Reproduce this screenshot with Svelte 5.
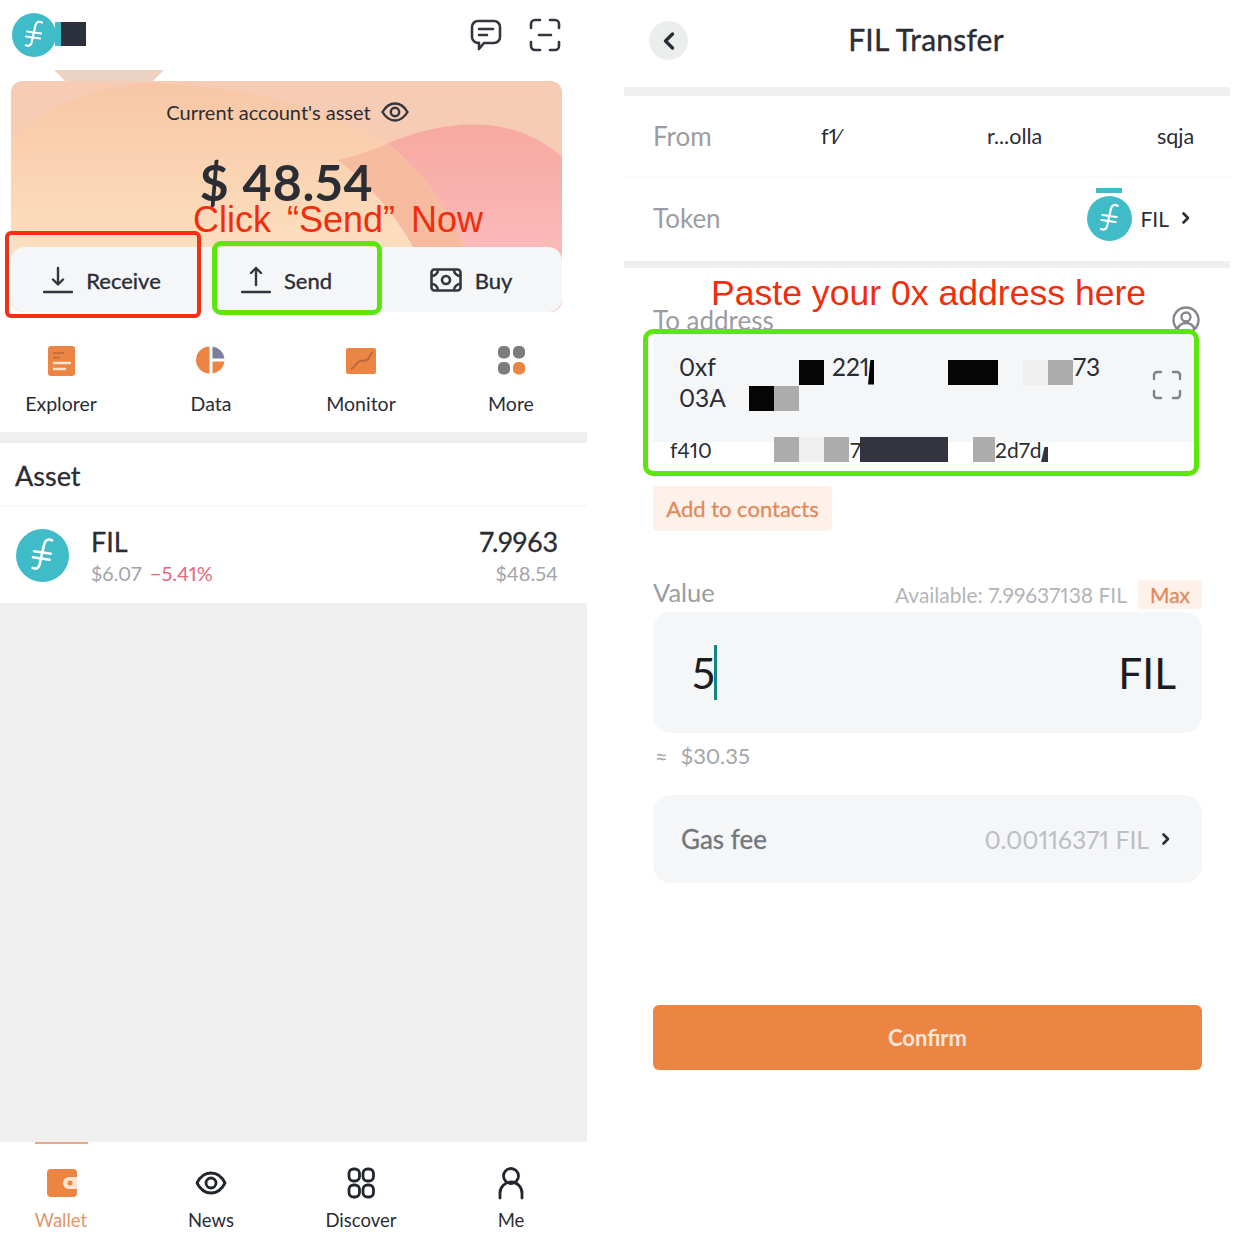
<script>
  const shortcuts = ["Explorer", "Data", "Monitor", "More"];
  const tabs = ["Wallet", "News", "Discover", "Me"];

  // address lines are partly blanked out, every piece has a fixed width
  const addressLines = [
    [
      { text: "0xf", w: 120 },
      { block: "black", w: 25 },
      { text: "221", w: 44, pad: 8 },
      { block: "wedge", w: 6 },
      { w: 74 },
      { block: "black", w: 50 },
      { w: 25 },
      { block: "light", w: 25 },
      { block: "grey", w: 25 },
      { text: "73", w: 30 },
    ],
    [
      { text: "03A", w: 70 },
      { block: "black", w: 25 },
      { block: "grey", w: 25 },
    ],
  ];
  const subLine = [
    { text: "f410", w: 104 },
    { block: "grey", w: 25 },
    { block: "light", w: 25 },
    { block: "grey", w: 25 },
    { text: "7", w: 11, pad: 1 },
    { block: "dark", w: 88 },
    { w: 25 },
    { block: "grey", w: 22 },
    { text: "2d7d", w: 46 },
    { block: "wedge low", w: 7 },
  ];
</script>

{#snippet filecoin(size)}
  <svg class="fil" width={size} height={size} viewBox="0 0 44 44">
    <circle cx="22" cy="22" r="22" fill="#3fbcc8" />
    <path d="M30 9.500c-3-1.600-5.600-.6-6.600 3l-3.800 17c-.8 3.200-3 4-5.800 2.800" fill="none" stroke="#fff" stroke-width="2.200" stroke-linecap="round" />
    <path d="M15 18.500l14 2M14 23.500l14 2" stroke="#fff" stroke-width="2" stroke-linecap="round" />
  </svg>
{/snippet}

{#snippet addressLine(parts)}
  {#each parts as p}
    {#if p.block}
      <span class="blank {p.block}" style="width:{p.w}px"></span>
    {:else}
      <span class="piece" style="width:{p.w}px;padding-left:{p.pad || 0}px">{p.text || ""}</span>
    {/if}
  {/each}
{/snippet}

<div class="page">
  <section class="wallet">
    <header class="top">
      <div class="account">
        {@render filecoin(44)}
        <span class="acct-blank"></span>
      </div>
      <div class="top-icons">
        <svg width="32" height="34" viewBox="0 0 32 34" fill="none" stroke="#33363f" stroke-width="2.600" stroke-linecap="round" stroke-linejoin="round">
          <path d="M8 3h16a6 6 0 0 1 6 6v10a6 6 0 0 1-6 6H14l-5 6v-6.200A6 6 0 0 1 2 19V9a6 6 0 0 1 6-6z" />
          <path d="M9 11h14M9 17h8" />
        </svg>
        <svg width="32" height="34" viewBox="0 0 32 34" fill="none" stroke="#33363f" stroke-width="2.600" stroke-linecap="round" stroke-linejoin="round">
          <path d="M2 10V6a4 4 0 0 1 4-4h5M21 2h5a4 4 0 0 1 4 4v4M30 24v4a4 4 0 0 1-4 4h-5M11 32H6a4 4 0 0 1-4-4v-4M10 17h12" />
        </svg>
      </div>
    </header>

    <div class="card">
      <div class="tab-shape"></div>
      <svg class="card-bg" viewBox="0 0 551 231" preserveAspectRatio="none">
        <defs>
          <linearGradient id="base" x1="0" y1="0" x2="0" y2="1">
            <stop offset="0" stop-color="#f8c6a4" />
            <stop offset="0.75" stop-color="#fce0c0" />
          </linearGradient>
          <linearGradient id="pink" x1="0" y1="0" x2="0" y2="1">
            <stop offset="0" stop-color="#f6a9a0" />
            <stop offset="1" stop-color="#fdc2c6" />
          </linearGradient>
        </defs>
        <rect width="551" height="231" fill="url(#base)" />
        <path d="M0 0H551V76C500 30 430 40 377 62 320 30 240 5 135 2 80 5 30 30 0 59z" fill="#f6ccb4" />
        <path d="M327 79C345 75 360 70 377 62 410 90 440 130 454 166L445 231H430C410 170 380 120 327 79z" fill="#f7bb9f" />
        <path d="M377 62C430 40 500 30 551 76V231H445C452 200 458 180 454 166 440 130 410 90 377 62z" fill="url(#pink)" />
      </svg>
      <div class="asset-head">
        <div class="asset-label">
          Current account's asset
          <svg width="28" height="20" viewBox="0 0 28 20" fill="none" stroke="#33363f" stroke-width="2.400">
            <path d="M1.500 10C5 4 9 1.500 14 1.500S23 4 26.500 10C23 16 19 18.500 14 18.500S5 16 1.500 10z" />
            <circle cx="14" cy="10" r="4.200" />
          </svg>
        </div>
        <div class="amount">$ 48.54</div>
      </div>
      <div class="actions">
        <div class="action receive">
          <svg width="30" height="28" viewBox="0 0 30 28" fill="none" stroke="#33363f" stroke-width="2.400" stroke-linecap="round" stroke-linejoin="round">
            <path d="M15 2v16M10 13.500l5 5 5-5M1 26h28" />
          </svg>
          Receive
        </div>
        <div class="action send">
          <svg width="30" height="28" viewBox="0 0 30 28" fill="none" stroke="#33363f" stroke-width="2.400" stroke-linecap="round" stroke-linejoin="round">
            <path d="M15 19V2M10 7l5-5 5 5M1 26h28" />
          </svg>
          Send
        </div>
        <div class="action buy">
          <svg width="32" height="24" viewBox="0 0 32 24" fill="none" stroke="#33363f" stroke-width="2.600" stroke-linejoin="round">
            <rect x="1.500" y="1.500" width="29" height="21" rx="3" />
            <circle cx="16" cy="12" r="4" />
            <path d="M2 8c3 0 6-3 6-6M30 8c-3 0-6-3-6-6M2 16c3 0 6 3 6 6M30 16c-3 0-6 3-6 6" />
          </svg>
          Buy
        </div>
      </div>
      <div class="mark red-mark"></div>
      <div class="mark green-mark"></div>
    </div>
    <div class="note click-note">Click “Send” Now</div>

    <nav class="shortcuts">
      {#each shortcuts as s, i}
        <div class="shortcut">
          <svg width="32" height="32" viewBox="0 0 32 32">
            {#if i === 0}
              <rect x="3" y="2" width="27" height="30" rx="3" fill="#ec8444" />
              <path d="M8 9h11M8 13.500h7" stroke="#c96f3c" stroke-width="2" />
              <path d="M8 19h18M8 25h13" stroke="#fde3d0" stroke-width="2.600" />
            {:else if i === 1}
              <path d="M14.500 2.500v27a13.500 13.500 0 0 1 0-27z" fill="#ec8444" />
              <path d="M17.500 2.500A13.500 13.500 0 0 1 29.500 14.500H17.500z" fill="#7d7c9c" />
              <path d="M17.500 17.500H29.500A13.500 13.500 0 0 1 17.500 29.500z" fill="#ec8444" />
            {:else if i === 2}
              <rect x="1" y="4" width="30" height="26" rx="2" fill="#ec8444" />
              <path d="M6 25c4-1 5-7 9-8s5 1 8-2 3-7 5-7" fill="none" stroke="#b8693f" stroke-width="2" />
            {:else}
              <rect x="3" y="2" width="12" height="12.500" rx="5" fill="#7c7c7f" />
              <rect x="18" y="2" width="12" height="12.500" rx="5" fill="#7c7c7f" />
              <rect x="3" y="18" width="12" height="12.500" rx="5" fill="#7c7c7f" />
              <rect x="18" y="18" width="12" height="12.500" rx="5" fill="#ec8444" />
            {/if}
          </svg>
          <span>{s}</span>
        </div>
      {/each}
    </nav>

    <div class="thick-rule"></div>
    <h2 class="asset-title">Asset</h2>
    <div class="asset-row">
      {@render filecoin(53)}
      <div class="coin-left">
        <div class="coin-name">FIL</div>
        <div class="coin-sub">$6.07 <span class="down">−5.41%</span></div>
      </div>
      <div class="coin-right">
        <div class="coin-qty">7.9963</div>
        <div class="coin-sub">$48.54</div>
      </div>
    </div>
    <div class="empty"></div>

    <nav class="tabs">
      {#each tabs as t, i}
        <div class="tab" class:active={i === 0}>
          <svg width="34" height="34" viewBox="0 0 34 34" fill="none" stroke="#22252e" stroke-width="2.800" stroke-linecap="round" stroke-linejoin="round">
            {#if i === 0}
              <rect x="3" y="3" width="30" height="28" rx="4" fill="#ec8444" stroke="none" />
              <path d="M33 11h-8a6 6 0 0 0 0 12h8z" fill="#fde3d0" stroke="none" />
              <circle cx="26" cy="17" r="2.500" fill="#ec8444" stroke="none" />
            {:else if i === 1}
              <path d="M3 17c3-6 8-10 14-10s11 4 14 10c-3 6-8 10-14 10S6 23 3 17z" />
              <circle cx="17" cy="17" r="5" />
            {:else if i === 2}
              <rect x="5" y="3" width="10.500" height="12" rx="4.500" />
              <rect x="19" y="3" width="10.500" height="12" rx="4.500" />
              <rect x="5" y="19" width="10.500" height="12" rx="4.500" />
              <rect x="19" y="19" width="10.500" height="12" rx="4.500" />
            {:else}
              <circle cx="17" cy="10" r="7.500" />
              <path d="M6 32v-5a11 11 0 0 1 22 0v5" />
            {/if}
          </svg>
          <span>{t}</span>
        </div>
      {/each}
    </nav>
  </section>

  <section class="transfer">
    <header class="bar">
      <div class="back">
        <svg width="14" height="20" viewBox="0 0 14 20" fill="none" stroke="#2a2c33" stroke-width="3.400" stroke-linecap="round" stroke-linejoin="round">
          <path d="M10.500 3L3.500 10l7 7" />
        </svg>
      </div>
      <h1>FIL Transfer</h1>
    </header>

    <div class="rule"></div>
    <div class="line from">
      <span class="muted-label">From</span>
      <span class="from-a">f1⁄</span>
      <span class="from-b">r...olla</span>
      <span class="from-c">sqja</span>
    </div>
    <div class="thin"></div>
    <div class="line token">
      <span class="muted-label">Token</span>
      <div class="token-pick">
        <span class="token-bar"></span>
        {@render filecoin(45)}
        <span>FIL</span>
        <svg width="10" height="14" viewBox="0 0 10 14" fill="none" stroke="#2a2c33" stroke-width="2.600" stroke-linecap="round" stroke-linejoin="round"><path d="M2.500 2.500L7 7l-4.500 4.500" /></svg>
      </div>
    </div>
    <div class="rule small"></div>

    <div class="form">
      <div class="note paste-note">Paste your 0x address here</div>
      <div class="to-head">
        <span class="muted-label">To address</span>
        <svg width="28" height="28" viewBox="0 0 28 28" fill="none" stroke="#84868c" stroke-width="2.400">
          <circle cx="14" cy="14" r="12.500" />
          <circle cx="14" cy="11" r="4.500" />
          <path d="M5.500 23c1.500-4 4.500-6 8.500-6s7 2 8.500 6" />
        </svg>
      </div>

      <div class="address">
        <div class="address-box">
          <div class="address-text">
            {#each addressLines as parts}
              <div class="addr-line">{@render addressLine(parts)}</div>
            {/each}
          </div>
          <svg class="scan" width="30" height="30" viewBox="0 0 30 30" fill="none" stroke="#7f828b" stroke-width="2.400" stroke-linecap="round" stroke-linejoin="round">
            <path d="M2 9V5a3 3 0 0 1 3-3h4M21 2h4a3 3 0 0 1 3 3v4M28 21v4a3 3 0 0 1-3 3h-4M9 28H5a3 3 0 0 1-3-3v-4" />
          </svg>
        </div>
        <div class="addr-line sub">{@render addressLine(subLine)}</div>
        <div class="mark address-mark"></div>
      </div>

      <div class="contacts">Add to contacts</div>

      <div class="value-head">
        <span class="muted-label">Value</span>
        <span class="available">Available: 7.99637138 FIL</span>
        <span class="max">Max</span>
      </div>
      <div class="value-box">
        <span class="typed">5</span>
        <span class="caret"></span>
        <span class="unit">FIL</span>
      </div>
      <div class="approx"><span>≈</span> $30.35</div>

      <div class="gas">
        <span class="gas-label">Gas fee</span>
        <span class="gas-val">0.00116371 FIL</span>
        <svg width="10" height="14" viewBox="0 0 10 14" fill="none" stroke="#2a2c33" stroke-width="2.600" stroke-linecap="round" stroke-linejoin="round"><path d="M2.500 2.500L7 7l-4.500 4.500" /></svg>
      </div>

      <button class="confirm" type="button">Confirm</button>
    </div>
  </section>
</div>

<style>
  :global(body) {
    margin: 0;
    background: #fff;
  }

  .page {
    display: flex;
    width: 1242px;
    height: 1248px;
    overflow: hidden;
    font-family: Lato, "Noto Sans", sans-serif;
    font-variant-numeric: proportional-nums;
    color: #2b2d35;
  }

  /* left phone */
  .wallet {
    position: relative;
    display: flex;
    flex-direction: column;
    width: 587px;
    height: 1248px;
    flex: none;
  }
  .top {
    display: flex;
    justify-content: space-between;
    align-items: center;
    height: 70px;
    padding: 0 26px 0 12px;
    box-sizing: border-box;
  }
  .account {
    display: flex;
    align-items: center;
  }
  .acct-blank {
    width: 25px;
    height: 24px;
    margin-left: 5px;
    margin-bottom: 2px;
    background: #2c2f3c;
    box-shadow: -6px 0 0 #3fbcc8;
  }
  .top-icons {
    display: flex;
    gap: 27px;
  }
  .fil {
    display: block;
    flex: none;
  }

  .card {
    position: relative;
    height: 231px;
    margin: 11px 25px 0 11px;
    border-radius: 12px 12px 14px 14px;
    display: flex;
    flex-direction: column;
    justify-content: space-between;
  }
  .card-bg {
    position: absolute;
    inset: 0;
    width: 100%;
    height: 100%;
    border-radius: 12px;
  }
  .tab-shape {
    position: absolute;
    left: 43px;
    top: -11px;
    width: 110px;
    height: 13px;
    background: #ecd2c2;
    clip-path: polygon(0 0, 100% 0, 88% 100%, 12% 100%);
  }
  .asset-head {
    position: relative;
    text-align: center;
  }
  .asset-label {
    display: flex;
    justify-content: center;
    align-items: center;
    gap: 10px;
    margin-top: 20px;
    padding-left: 2px;
    font-size: 20px;
    height: 22px;
  }
  .amount {
    margin-top: 30px;
    font-size: 50px;
    line-height: 58px;
    font-weight: 700;
    letter-spacing: 0.6px;
  }
  .actions {
    position: relative;
    display: grid;
    grid-template-columns: 191px 180px 1fr;
    height: 65px;
    background: #f5f6f8;
    border-radius: 14px;
  }
  .action {
    display: flex;
    align-items: center;
    justify-content: center;
    gap: 13px;
    font-size: 22px;
    -webkit-text-stroke: 0.35px currentColor;
    padding-top: 1px;
  }
  .receive {
    padding-right: 9px;
  }
  .send {
    padding-right: 11px;
  }
  .buy {
    padding-right: 2px;
  }

  .mark {
    position: absolute;
    box-sizing: border-box;
  }
  .red-mark {
    left: -6px;
    top: 150px;
    width: 196px;
    height: 87px;
    border: 4px solid #f42f14;
    border-radius: 6px;
  }
  .green-mark {
    left: 201px;
    top: 160px;
    width: 170px;
    height: 74px;
    border: 5px solid #5ce60c;
    border-radius: 9px;
  }
  .note {
    position: absolute;
    font-family: "Liberation Sans", sans-serif;
    font-size: 36px;
    line-height: 40px;
    color: #f02e0c;
    white-space: nowrap;
  }
  .click-note {
    left: 193px;
    top: 200px;
    font-size: 36px;
    word-spacing: 6px;
  }

  .shortcuts {
    display: grid;
    grid-template-columns: repeat(4, 150px);
    margin: 32px 0 0 -14px;
    height: 88px;
  }
  .shortcut {
    display: flex;
    flex-direction: column;
    align-items: center;
    gap: 15px;
    font-size: 19.5px;
    line-height: 26px;
  }
  .thick-rule {
    height: 11px;
    background: #f0f0f0;
  }
  .asset-title {
    margin: 0;
    height: 64px;
    line-height: 66px;
    padding-left: 15px;
    font-size: 27px;
    font-weight: 400;
    -webkit-text-stroke: 0.3px currentColor;
    border-bottom: 2px solid #f8f8f8;
    box-sizing: border-box;
  }
  .asset-row {
    display: flex;
    align-items: center;
    height: 96px;
    padding: 0 29px 0 16px;
    box-sizing: border-box;
  }
  .coin-left {
    margin-left: 22px;
    flex: 1;
  }
  .coin-right {
    text-align: right;
  }
  .coin-name,
  .coin-qty {
    font-size: 27px;
    line-height: 34px;
    padding-top: 2px;
    -webkit-text-stroke: 0.3px currentColor;
  }
  .coin-sub {
    font-size: 20px;
    line-height: 28px;
    color: #a3a5aa;
  }
  .down {
    margin-left: 3px;
    color: #e4677a;
  }
  .empty {
    flex: 1;
    background: #efefef;
  }
  .tabs {
    display: grid;
    grid-template-columns: repeat(4, 150px);
    margin-left: -14px;
    height: 106px;
    width: 601px;
    padding-top: 24px;
    box-sizing: border-box;
  }
  .tab {
    position: relative;
    display: flex;
    flex-direction: column;
    align-items: center;
    gap: 7px;
    font-size: 18.5px;
    line-height: 26px;
  }
  .tab.active {
    color: #e2946a;
  }
  .tab.active::before {
    content: "";
    position: absolute;
    top: -24px;
    left: 49px;
    width: 53px;
    height: 2px;
    background: #e9a988;
  }

  /* right phone */
  .transfer {
    position: relative;
    display: flex;
    flex-direction: column;
    width: 606px;
    margin-left: 37px;
    flex: none;
  }
  .bar {
    position: relative;
    display: flex;
    align-items: center;
    justify-content: center;
    height: 87px;
    padding: 0 0 10px;
    box-sizing: border-box;
  }
  .bar h1 {
    margin: 0;
    font-size: 30px;
    font-weight: 400;
    -webkit-text-stroke: 0.35px currentColor;
    padding-right: 2px;
    letter-spacing: 0.2px;
  }
  .back {
    position: absolute;
    left: 25px;
    top: 21px;
    width: 39px;
    height: 39px;
    border-radius: 50%;
    background: #eceded;
    display: flex;
    align-items: center;
    justify-content: center;
  }
  .rule {
    height: 9px;
    background: #f0f0f0;
  }
  .rule.small {
    height: 7px;
  }
  .thin {
    height: 2px;
    background: #f9f9f9;
  }
  .line {
    display: flex;
    align-items: center;
    padding: 0 39px 0 29px;
    font-size: 21.5px;
  }
  .from {
    height: 80px;
  }
  .token {
    height: 83px;
    padding-bottom: 3px;
    box-sizing: border-box;
    justify-content: space-between;
  }
  .muted-label {
    font-size: 26px;
    color: #9b9da2;
  }
  .from-a {
    position: absolute;
    left: 197px;
  }
  .from-b {
    position: absolute;
    left: 363px;
    width: 58px;
    overflow: hidden;
    white-space: nowrap;
  }
  .from-c {
    position: absolute;
    left: 533px;
  }
  .token-pick {
    position: relative;
    display: flex;
    align-items: center;
    gap: 8px;
    font-size: 21px;
  }
  .token-pick svg:last-child {
    margin-left: 4px;
  }
  .token-bar {
    position: absolute;
    left: 9px;
    top: -8px;
    width: 26px;
    height: 5px;
    background: #3fbcc8;
  }

  .form {
    position: relative;
    padding: 0 28px 0 29px;
  }
  .paste-note {
    left: 87px;
    top: 5px;
    font-size: 35.6px;
  }
  .to-head {
    display: flex;
    justify-content: space-between;
    align-items: center;
    height: 64px;
    padding-top: 40px;
    box-sizing: border-box;
    margin-right: 2px;
  }
  .to-head .muted-label {
    line-height: 30px;
  }

  .address {
    position: relative;
    width: 545px;
  }
  .address-box {
    display: flex;
    align-items: center;
    justify-content: space-between;
    height: 110px;
    padding: 0 16px 4px 26px;
    box-sizing: border-box;
    background: #f5f6f8;
    border-radius: 10px 10px 0 0;
  }
  .address-text {
    display: flex;
    flex-direction: column;
    gap: 1px;
  }
  .addr-line {
    display: flex;
    align-items: center;
    height: 25px;
    font-size: 24.5px;
    white-space: nowrap;
  }
  .address-text .addr-line:first-child .piece {
    margin-top: -10px;
  }
  .addr-line.sub {
    margin-top: -5px;
    padding-left: 17px;
    font-size: 21px;
  }
  .piece {
    display: inline-block;
    box-sizing: border-box;
    height: 30px;
    line-height: 30px;
    flex: none;
  }
  .blank {
    display: inline-block;
    height: 25px;
    flex: none;
  }
  .blank.black {
    background: #050505;
  }
  .blank.grey {
    background: #acacac;
  }
  .blank.light {
    background: #efefef;
  }
  .blank.dark {
    background: #33343f;
  }
  .blank.wedge {
    background: #050505;
    clip-path: polygon(40% 0, 100% 0, 100% 100%, 0 100%);
  }
  .blank.wedge.low {
    background: #33343f;
    clip-path: polygon(50% 40%, 100% 40%, 100% 100%, 0 100%);
  }
  .address-mark {
    left: -10px;
    top: -3px;
    width: 556px;
    height: 147px;
    border: 5px solid #5ce60c;
    border-radius: 10px;
  }

  .contacts {
    display: inline-block;
    margin-top: 24px;
    width: 179px;
    height: 45px;
    line-height: 45px;
    text-align: center;
    box-sizing: border-box;
    background: #fdf1e9;
    color: #e2895a;
    font-size: 22px;
    -webkit-text-stroke: 0.3px currentColor;
    border-radius: 4px;
  }
  .value-head {
    display: flex;
    align-items: center;
    height: 32px;
    margin-top: 47px;
  }
  .value-head .muted-label {
    font-size: 25.5px;
    margin-top: -4px;
  }
  .available {
    margin-left: auto;
    font-size: 21px;
    color: #b3b5b9;
  }
  .max {
    margin-left: 11px;
    width: 64px;
    height: 29px;
    line-height: 29px;
    text-align: center;
    background: #fdf1e9;
    color: #e2895a;
    font-size: 21px;
    -webkit-text-stroke: 0.3px currentColor;
    border-radius: 4px;
  }
  .value-box {
    display: flex;
    align-items: center;
    height: 121px;
    margin-top: 2px;
    padding: 0 26px 0 39px;
    background: #f5f6f8;
    border-radius: 18px;
    font-size: 42.5px;
    color: #1c1d22;
  }
  .caret {
    width: 3px;
    height: 55px;
    margin-left: -1px;
    background: #12877c;
  }
  .unit {
    margin-left: auto;
  }
  .approx {
    display: flex;
    align-items: center;
    gap: 13px;
    height: 44px;
    font-size: 22px;
    color: #a3a5aa;
    margin-bottom: 18px;
  }
  .approx span {
    margin-left: 2px;
  }
  .gas {
    display: flex;
    align-items: center;
    height: 88px;
    padding: 0 31px 0 28px;
    background: #f5f6f8;
    border-radius: 18px;
  }
  .gas-label {
    font-size: 26px;
    -webkit-text-stroke: 0.3px currentColor;
    color: #74767e;
  }
  .gas-val {
    margin-left: auto;
    margin-right: 12px;
    font-size: 24.7px;
    color: #bcbec3;
  }
  .confirm {
    display: block;
    width: 100%;
    height: 65px;
    margin-top: 122px;
    border: 0;
    border-radius: 6px;
    background: #ec8444;
    color: #fbe6d8;
    font-family: inherit;
    font-size: 22px;
    font-weight: 700;
  }
</style>
